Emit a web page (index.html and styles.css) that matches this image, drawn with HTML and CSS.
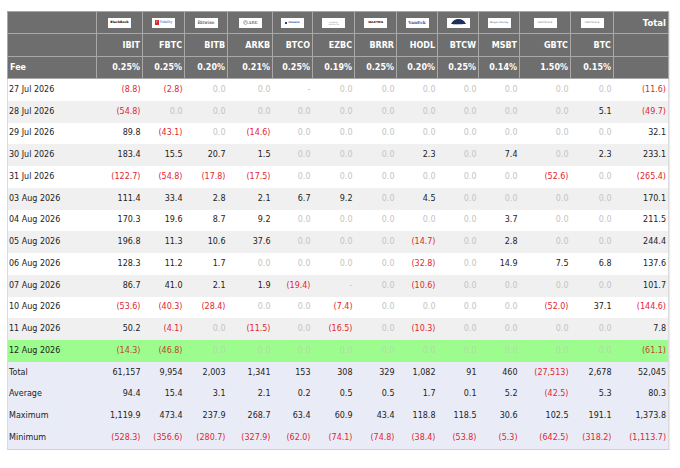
FILE: index.html
```html
<!DOCTYPE html>
<html>
<head>
<meta charset="utf-8">
<link rel="stylesheet" href="styles.css">
</head>
<body>
<div class="wrap">
<table class="flows">
<colgroup>
<col class="w-date"><col class="w-46"><col class="w-42"><col class="w-43"><col class="w-45"><col class="w-40"><col class="w-42"><col class="w-42"><col class="w-41"><col class="w-41"><col class="w-41"><col class="w-51"><col class="w-43"><col class="w-55">
</colgroup>
<thead>
<tr class="h-logo">
<th></th>
<th><span class="logo lg-br">BlackRock</span></th>
<th><span class="logo lg-fid"><span class="fid-box">F</span>Fidelity</span></th>
<th><span class="logo lg-bw">Bitwise</span></th>
<th><span class="logo lg-ark"><svg class="ark-ic" viewBox="0 0 10 10"><circle cx="5" cy="5" r="4" fill="none" stroke="#555" stroke-width="0.8"/><path d="M2.5 7 L5 2.5 L7.5 7" fill="none" stroke="#555" stroke-width="0.8"/></svg>ARK</span></th>
<th><span class="logo lg-inv"><span class="inv-ic"></span>Invesco</span></th>
<th><span class="logo lg-fr">FRANKLIN<br>TEMPLETON</span></th>
<th><span class="logo lg-val">VALKYRIE</span></th>
<th><span class="logo lg-ve">VanEck</span></th>
<th><span class="logo lg-wt"><svg class="wt-ic" viewBox="0 0 20 6"><path d="M1 6 Q4 0 10 0 Q16 0 19 6 Z" fill="#1e2f5a"/></svg><span class="wt-tx">WisdomTree</span></span></th>
<th><span class="logo lg-ms">Morgan Stanley</span></th>
<th><span class="logo lg-gs">GRAYSCALE</span></th>
<th><span class="logo lg-gs">GRAYSCALE</span></th>
<th class="tot-h">Total</th>
</tr>
<tr class="h-tick">
<th></th><th>IBIT</th><th>FBTC</th><th>BITB</th><th>ARKB</th><th>BTCO</th><th>EZBC</th><th>BRRR</th><th>HODL</th><th>BTCW</th><th>MSBT</th><th>GBTC</th><th>BTC</th><th></th>
</tr>
<tr class="h-fee">
<th class="lab">Fee</th><th>0.25%</th><th>0.25%</th><th>0.20%</th><th>0.21%</th><th>0.25%</th><th>0.19%</th><th>0.25%</th><th>0.20%</th><th>0.25%</th><th>0.14%</th><th>1.50%</th><th>0.15%</th><th></th>
</tr>
</thead>
<tbody>
<tr><td>27 Jul 2026</td><td class="n">(8.8)</td><td class="n">(2.8)</td><td class="z">0.0</td><td class="z">0.0</td><td class="z">-</td><td class="z">0.0</td><td class="z">0.0</td><td class="z">0.0</td><td class="z">0.0</td><td class="z">0.0</td><td class="z">0.0</td><td class="z">0.0</td><td class="n">(11.6)</td></tr>
<tr><td>28 Jul 2026</td><td class="n">(54.8)</td><td class="z">0.0</td><td class="z">0.0</td><td class="z">0.0</td><td class="z">0.0</td><td class="z">0.0</td><td class="z">0.0</td><td class="z">0.0</td><td class="z">0.0</td><td class="z">0.0</td><td class="z">0.0</td><td>5.1</td><td class="n">(49.7)</td></tr>
<tr><td>29 Jul 2026</td><td>89.8</td><td class="n">(43.1)</td><td class="z">0.0</td><td class="n">(14.6)</td><td class="z">0.0</td><td class="z">0.0</td><td class="z">0.0</td><td class="z">0.0</td><td class="z">0.0</td><td class="z">0.0</td><td class="z">0.0</td><td class="z">0.0</td><td>32.1</td></tr>
<tr><td>30 Jul 2026</td><td>183.4</td><td>15.5</td><td>20.7</td><td>1.5</td><td class="z">0.0</td><td class="z">0.0</td><td class="z">0.0</td><td>2.3</td><td class="z">0.0</td><td>7.4</td><td class="z">0.0</td><td>2.3</td><td>233.1</td></tr>
<tr><td>31 Jul 2026</td><td class="n">(122.7)</td><td class="n">(54.8)</td><td class="n">(17.8)</td><td class="n">(17.5)</td><td class="z">0.0</td><td class="z">0.0</td><td class="z">0.0</td><td class="z">0.0</td><td class="z">0.0</td><td class="z">0.0</td><td class="n">(52.6)</td><td class="z">0.0</td><td class="n">(265.4)</td></tr>
<tr><td>03 Aug 2026</td><td>111.4</td><td>33.4</td><td>2.8</td><td>2.1</td><td>6.7</td><td>9.2</td><td class="z">0.0</td><td>4.5</td><td class="z">0.0</td><td class="z">0.0</td><td class="z">0.0</td><td class="z">0.0</td><td>170.1</td></tr>
<tr><td>04 Aug 2026</td><td>170.3</td><td>19.6</td><td>8.7</td><td>9.2</td><td class="z">0.0</td><td class="z">0.0</td><td class="z">0.0</td><td class="z">0.0</td><td class="z">0.0</td><td>3.7</td><td class="z">0.0</td><td class="z">0.0</td><td>211.5</td></tr>
<tr><td>05 Aug 2026</td><td>196.8</td><td>11.3</td><td>10.6</td><td>37.6</td><td class="z">0.0</td><td class="z">0.0</td><td class="z">0.0</td><td class="n">(14.7)</td><td class="z">0.0</td><td>2.8</td><td class="z">0.0</td><td class="z">0.0</td><td>244.4</td></tr>
<tr><td>06 Aug 2026</td><td>128.3</td><td>11.2</td><td>1.7</td><td class="z">0.0</td><td class="z">0.0</td><td class="z">0.0</td><td class="z">0.0</td><td class="n">(32.8)</td><td class="z">0.0</td><td>14.9</td><td>7.5</td><td>6.8</td><td>137.6</td></tr>
<tr><td>07 Aug 2026</td><td>86.7</td><td>41.0</td><td>2.1</td><td>1.9</td><td class="n">(19.4)</td><td class="z">-</td><td class="z">0.0</td><td class="n">(10.6)</td><td class="z">0.0</td><td class="z">0.0</td><td class="z">0.0</td><td class="z">0.0</td><td>101.7</td></tr>
<tr><td>10 Aug 2026</td><td class="n">(53.6)</td><td class="n">(40.3)</td><td class="n">(28.4)</td><td class="z">0.0</td><td class="z">0.0</td><td class="n">(7.4)</td><td class="z">0.0</td><td class="z">0.0</td><td class="z">0.0</td><td class="z">0.0</td><td class="n">(52.0)</td><td>37.1</td><td class="n">(144.6)</td></tr>
<tr><td>11 Aug 2026</td><td>50.2</td><td class="n">(4.1)</td><td class="z">0.0</td><td class="n">(11.5)</td><td class="z">0.0</td><td class="n">(16.5)</td><td class="z">0.0</td><td class="n">(10.3)</td><td class="z">0.0</td><td class="z">0.0</td><td class="z">0.0</td><td class="z">0.0</td><td>7.8</td></tr>
<tr class="today"><td>12 Aug 2026</td><td class="n">(14.3)</td><td class="n">(46.8)</td><td class="z">0.0</td><td class="z">0.0</td><td class="z">0.0</td><td class="z">0.0</td><td class="z">0.0</td><td class="z">0.0</td><td class="z">0.0</td><td class="z">0.0</td><td class="z">0.0</td><td class="z">0.0</td><td class="n">(61.1)</td></tr>
<tr class="sum"><td>Total</td><td>61,157</td><td>9,954</td><td>2,003</td><td>1,341</td><td>153</td><td>308</td><td>329</td><td>1,082</td><td>91</td><td>460</td><td class="n">(27,513)</td><td>2,678</td><td>52,045</td></tr>
<tr class="sum"><td>Average</td><td>94.4</td><td>15.4</td><td>3.1</td><td>2.1</td><td>0.2</td><td>0.5</td><td>0.5</td><td>1.7</td><td>0.1</td><td>5.2</td><td class="n">(42.5)</td><td>5.3</td><td>80.3</td></tr>
<tr class="sum"><td>Maximum</td><td>1,119.9</td><td>473.4</td><td>237.9</td><td>268.7</td><td>63.4</td><td>60.9</td><td>43.4</td><td>118.8</td><td>118.5</td><td>30.6</td><td>102.5</td><td>191.1</td><td>1,373.8</td></tr>
<tr class="sum last"><td>Minimum</td><td class="n">(528.3)</td><td class="n">(356.6)</td><td class="n">(280.7)</td><td class="n">(327.9)</td><td class="n">(62.0)</td><td class="n">(74.1)</td><td class="n">(74.8)</td><td class="n">(38.4)</td><td class="n">(53.8)</td><td class="n">(5.3)</td><td class="n">(642.5)</td><td class="n">(318.2)</td><td class="n">(1,113.7)</td></tr>
</tbody>
</table>
</div>
</body>
</html>
```
FILE: styles.css
```css
html, body {
  margin: 0;
  padding: 0;
  background: #ffffff;
}
.wrap {
  padding: 11px 0 0 7px;
}
.flows {
  border-collapse: collapse;
  table-layout: fixed;
  width: 661px;
  font-family: "DejaVu Sans", sans-serif;
  font-size: 8px;
  color: #222222;
  border-left: 1px solid #dcdcdc;
  border-right: 1px solid #dcdcdc;
  border-bottom: 1px solid #d0d0d0;
  box-shadow: 1px 1px 1px rgba(0,0,0,0.08);
}
.w-date { width: 89px; }
.w-40 { width: 40px; }
.w-41 { width: 41px; }
.w-42 { width: 42px; }
.w-43 { width: 43px; }
.w-45 { width: 45px; }
.w-46 { width: 46px; }
.w-51 { width: 51px; }
.w-55 { width: 55px; }

.flows th {
  background: #6e6e6e;
  color: #ffffff;
  font-weight: bold;
  text-align: right;
  padding: 0 2px;
  border: 1px solid #a8a8a8;
  white-space: nowrap;
  overflow: hidden;
}
.flows th.lab { text-align: left; padding-left: 2px; }
.h-logo th { height: 21px; text-align: center; vertical-align: middle; }
.h-logo th.tot-h { text-align: right; font-size: 8.5px; }
.h-tick th { height: 22px; }
.h-fee th { height: 21px; }

.flows td {
  height: 21.76px;
  padding: 0 2px 0 1px;
  text-align: right;
  white-space: nowrap;
  overflow: hidden;
  line-height: 10px;
}
.flows td:first-child { text-align: left; padding-left: 1px; }
.flows tbody tr:nth-child(even) td { background: #f0f0f0; }
.flows tbody tr:nth-child(odd) td { background: #ffffff; }
.flows td.n { color: #e2262f; }
.flows td.z { color: #c4c4c4; }

.flows tbody tr.today td { background: #9cfc8e; }
.flows tbody tr.today td.n { color: #c0452a; }
.flows tbody tr.today td.z { color: #b2dca8; }
.flows tbody tr.sum td { background: #e9ecf7; }

/* logos */
.logo {
  display: inline-flex;
  align-items: center;
  justify-content: center;
  width: 23px;
  height: 10px;
  background: #ffffff;
  vertical-align: middle;
  font-weight: bold;
  font-size: 3px;
  line-height: 3px;
  color: #111;
  overflow: hidden;
  font-family: "DejaVu Sans", sans-serif;
}
.lg-br { color: #000; font-size: 3.2px; }
.lg-fid { color: #3b5fb0; font-weight: normal; font-size: 3.5px; gap: 1px; }
.fid-box {
  display: inline-flex;
  align-items: center;
  justify-content: center;
  width: 4px;
  height: 5px;
  background: #d8262c;
  color: #fff;
  font-size: 3px;
}
.lg-bw { font-family: "DejaVu Serif", serif; font-weight: normal; font-size: 4.6px; color: #222; }
.lg-ark { font-family: "DejaVu Serif", serif; font-weight: normal; font-size: 4px; color: #444; gap: 1px; }
.ark-ic { width: 5px; height: 5px; }
.lg-inv { color: #1b3f9a; font-size: 2.6px; gap: 1px; }
.inv-ic { width: 2px; height: 2px; background: #1b3f9a; display: inline-block; }
.lg-fr { color: #8a8a8a; font-weight: normal; font-size: 1.8px; line-height: 2px; flex-direction: column; }
.lg-val { color: #111; font-size: 2.8px; }
.lg-ve { color: #2a4f9e; font-family: "DejaVu Serif", serif; font-size: 4.2px; }
.lg-wt { flex-direction: column; gap: 0; }
.wt-ic { width: 17px; height: 5px; display: block; }
.wt-tx { color: #1e2f5a; font-size: 1.6px; line-height: 2px; font-weight: normal; }
.lg-ms { color: #555; font-weight: normal; font-size: 2.4px; }
.lg-gs { color: #777; font-weight: normal; font-size: 2.4px; letter-spacing: 0.05px; }
```
